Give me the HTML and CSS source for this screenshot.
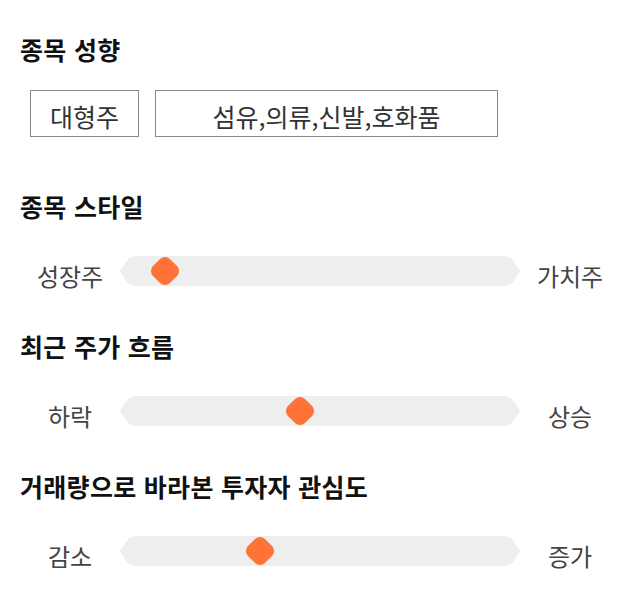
FILE: index.html
```html
<!DOCTYPE html>
<html lang="ko">
<head>
  <meta charset="UTF-8">
  <meta name="viewport" content="width=device-width, initial-scale=1.0">
  <title>종목 분석</title>
  <link rel="stylesheet" href="styles.css">
</head>
<body>
  <section class="sec">
    <h2 class="title">종목 성향</h2>
    <div class="tags">
      <span class="tag size">대형주</span>
      <span class="tag sector">섬유,의류,신발,호화품</span>
    </div>
  </section>

  <section class="sec">
    <h2 class="title">종목 스타일</h2>
    <div class="slider">
      <span class="label">성장주</span>
      <div class="track">
        <svg class="track-bg" viewBox="0 0 400 30" preserveAspectRatio="none">
          <path d="M16 0 H384 C392 0 396 9 400 15 C396 21 392 30 384 30 H16 C8 30 4 21 0 15 C4 9 8 0 16 0 Z" fill="#eeeeee"/>
        </svg>
        <div class="thumb" style="left: 11.3%"></div>
      </div>
      <span class="label">가치주</span>
    </div>
  </section>

  <section class="sec">
    <h2 class="title">최근 주가 흐름</h2>
    <div class="slider">
      <span class="label">하락</span>
      <div class="track">
        <svg class="track-bg" viewBox="0 0 400 30" preserveAspectRatio="none">
          <path d="M16 0 H384 C392 0 396 9 400 15 C396 21 392 30 384 30 H16 C8 30 4 21 0 15 C4 9 8 0 16 0 Z" fill="#eeeeee"/>
        </svg>
        <div class="thumb" style="left: 45%"></div>
      </div>
      <span class="label">상승</span>
    </div>
  </section>

  <section class="sec">
    <h2 class="title">거래량으로 바라본 투자자 관심도</h2>
    <div class="slider">
      <span class="label">감소</span>
      <div class="track">
        <svg class="track-bg" viewBox="0 0 400 30" preserveAspectRatio="none">
          <path d="M16 0 H384 C392 0 396 9 400 15 C396 21 392 30 384 30 H16 C8 30 4 21 0 15 C4 9 8 0 16 0 Z" fill="#eeeeee"/>
        </svg>
        <div class="thumb" style="left: 35%"></div>
      </div>
      <span class="label">증가</span>
    </div>
  </section>
</body>
</html>
```

FILE: styles.css
```css
* {
  margin: 0;
  padding: 0;
  box-sizing: border-box;
}

body {
  width: 640px;
  padding: 34px 20px 39px;
  font-family: "Noto Sans CJK KR", "Noto Sans", sans-serif;
  color: #111;
  background: #fff;
}

.sec + .sec {
  margin-top: 54px;
}

.sec:nth-child(n+3) {
  margin-top: 45px;
}

.title {
  font-size: 25px;
  font-weight: 700;
  line-height: 30px;
  color: #111;
  letter-spacing: 0.3px;
}

.tags {
  display: flex;
  gap: 16px;
  margin-top: 26px;
  padding-left: 10px;
}

.tag {
  display: flex;
  align-items: center;
  justify-content: center;
  height: 47px;
  border: 1px solid #888;
  font-size: 25px;
  color: #333;
  padding-top: 4px;
}

.tag.size {
  width: 109px;
}

.tag.sector {
  width: 343px;
}

.slider {
  display: grid;
  grid-template-columns: 100px 1fr 100px;
  grid-template-rows: 30px;
  align-items: start;
  margin-top: 35px;
}

.label {
  text-align: center;
  font-size: 24px;
  line-height: 40px;
  color: #444;
}

.track {
  position: relative;
  height: 30px;
}

.track-bg {
  display: block;
  width: 100%;
  height: 30px;
}

.thumb {
  position: absolute;
  top: 50%;
  width: 24px;
  height: 24px;
  border-radius: 7px;
  background: #ff7338;
  transform: translate(-50%, -50%) rotate(45deg);
}
```
